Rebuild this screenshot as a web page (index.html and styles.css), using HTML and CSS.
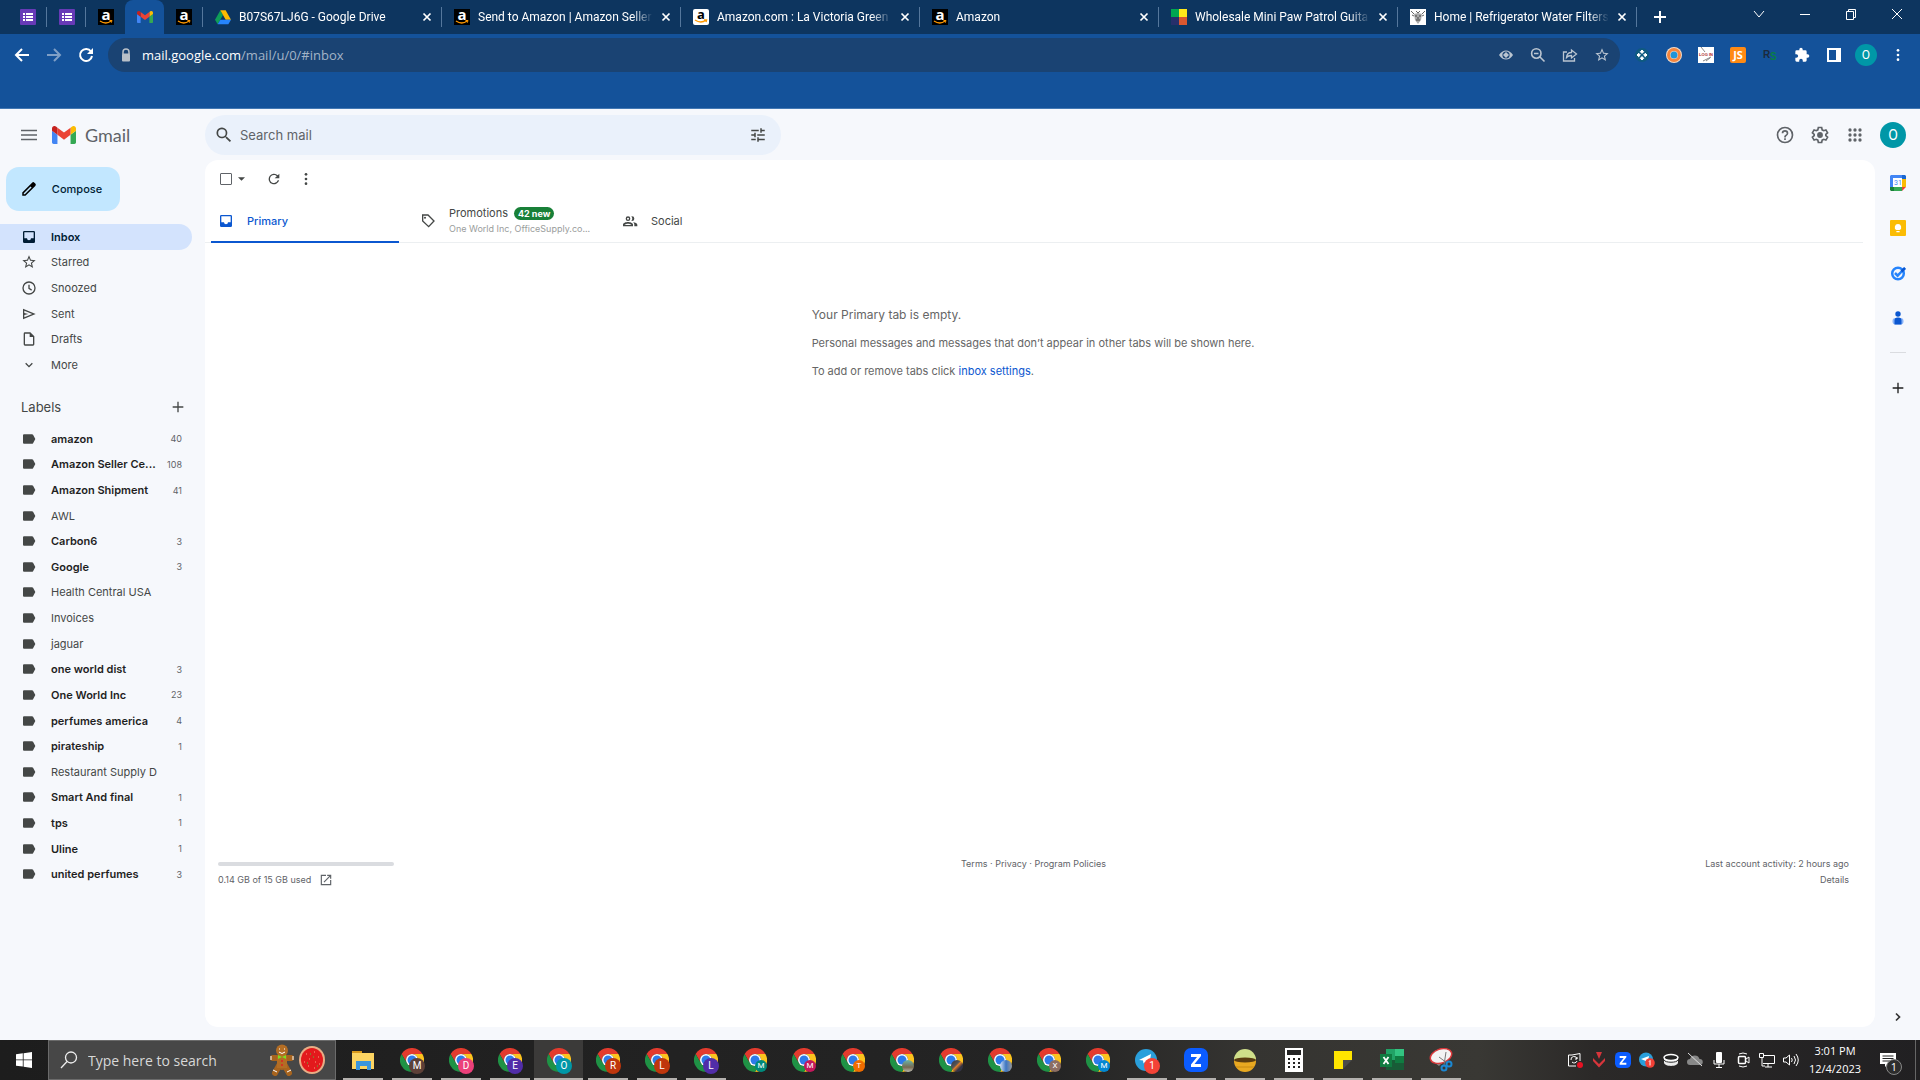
FILE: index.html
```html
<!DOCTYPE html>
<html lang="en">
<head>
    <meta charset="UTF-8">
    <meta name="viewport" content="width=device-width, initial-scale=1.0">
    <title>Inbox - Gmail</title>
    <link rel="stylesheet" href="styles.css">
</head>
<body>

<!-- icons used more than once -->
<svg class="sprite" aria-hidden="true">
    <symbol id="i-list" viewBox="0 0 16 16"><rect width="16" height="16" rx="1" fill="#673ab7"/><path fill="#fff" d="M3 4h2v2H3zM6 4h7v2H6zM3 7h2v2H3zM6 7h7v2H6zM3 10h2v2H3zM6 10h7v2H6z"/></symbol>
    <symbol id="i-amazon" viewBox="0 0 16 16"><rect width="16" height="16" fill="#000"/><text x="8" y="11" text-anchor="middle" font-family="Open Sans" font-weight="700" font-size="15" fill="#fff">a</text><path d="M2 12q6 4 11 0" fill="none" stroke="#f90" stroke-width="1.3"/><path d="M11.500 11.500h2.500l-.7 2.200" fill="none" stroke="#f90"/></symbol>
    <symbol id="i-close" viewBox="0 0 10 10"><path d="M1.500 1.500l7 7M8.500 1.500l-7 7" stroke="currentColor" stroke-width="1.700"/></symbol>
    <symbol id="i-gmail" viewBox="52 42 88 66"><path fill="#4285f4" d="M58 108h14V74L52 59v43c0 3.320 2.690 6 6 6"/><path fill="#34a853" d="M120 108h14c3.320 0 6-2.690 6-6V59l-20 15"/><path fill="#fbbc04" d="M120 48v26l20-15v-8c0-7.420-8.470-11.650-14.400-7.200"/><path fill="#ea4335" d="M72 74V48l24 18 24-18v26L96 92"/><path fill="#c5221f" d="M52 51v8l20 15V48l-5.600-4.200c-5.940-4.450-14.400-.22-14.400 7.200"/></symbol>
    <symbol id="i-inbox" viewBox="0 0 24 24"><path d="M19 3H5a2 2 0 0 0-2 2v14a2 2 0 0 0 2 2h14a2 2 0 0 0 2-2V5a2 2 0 0 0-2-2zm0 11h-4a3 3 0 0 1-6 0H5V5h14z"/></symbol>
    <symbol id="i-star" viewBox="0 0 24 24"><path d="M22 9.240l-7.190-.62L12 2 9.190 8.630 2 9.240l5.460 4.730L5.820 21 12 17.270 18.180 21l-1.630-7.030zM12 15.400l-3.760 2.270 1-4.280-3.320-2.880 4.380-.38L12 6.100l1.710 4.040 4.380.38-3.320 2.880 1 4.280z"/></symbol>
    <symbol id="i-label" viewBox="0 0 24 24"><path d="M17 5H4.500A1.500 1.500 0 0 0 3 6.500v11A1.500 1.500 0 0 0 4.500 19H16.500a2 2 0 0 0 1.600-.8L21.500 12l-3.400-6.200A2 2 0 0 0 16.500 5z"/></symbol>
    <symbol id="i-plus" viewBox="0 0 24 24"><path d="M20 13h-7v7h-2v-7H4v-2h7V4h2v7h7z"/></symbol>
    <symbol id="i-dots" viewBox="0 0 24 24"><circle cx="12" cy="5" r="2"/><circle cx="12" cy="12" r="2"/><circle cx="12" cy="19" r="2"/></symbol>
    <symbol id="i-refresh" viewBox="0 0 24 24"><path d="M17.650 6.350A8 8 0 1 0 19.730 14h-2.080A6 6 0 1 1 12 6c1.660 0 3.140.69 4.220 1.780L13 11h7V4z"/></symbol>
    <symbol id="i-search" viewBox="0 0 24 24"><path d="M15.500 14h-.79l-.28-.27a6.500 6.500 0 1 0-.7.7l.27.28v.79l5 4.990L20.490 19zm-6 0a4.500 4.500 0 1 1 0-9 4.500 4.500 0 0 1 0 9z"/></symbol>
    <symbol id="i-chrome" viewBox="0 0 48 48"><path fill="#e33b2e" d="M24 12h20.800A24 24 0 0 0 3.200 12l10.400 18A12 12 0 0 1 24 12z"/><path fill="#fcc31e" d="M34.400 30 24 48a24 24 0 0 0 20.800-36H24a12 12 0 0 1 10.400 18z"/><path fill="#1f9245" d="M13.600 30a12 12 0 0 0 20.800 0L24 48A24 24 0 0 1 3.200 12z"/><circle cx="24" cy="24" r="12" fill="#fff"/><circle cx="24" cy="24" r="9" fill="#2d7bea"/></symbol>
    <symbol id="i-zoom" viewBox="0 0 24 24"><rect width="24" height="24" rx="7" fill="#0b5cff"/><path d="M7 6h10v2l-6.500 8H17v3H7v-2.500L13 9H7z" fill="#fff"/></symbol>
    <symbol id="i-telegram" viewBox="0 0 24 24"><circle cx="11" cy="12" r="11" fill="#2a9fdb"/><path d="M4 12l12-6-1.500 10-4-2.500-2 2-.5-3z" fill="#fff"/></symbol>
</svg>

<header class="browser">
    <div class="tab-strip">
        <div class="pinned"><svg><use href="#i-list"/></svg></div>
        <div class="pinned"><svg><use href="#i-list"/></svg></div>
        <div class="pinned no-line"><svg><use href="#i-amazon"/></svg></div>
        <div class="pinned active"><svg><use href="#i-gmail"/></svg></div>
        <div class="pinned"><svg><use href="#i-amazon"/></svg></div>
        <div class="tab">
            <svg viewBox="0 0 24 22"><path fill="#0f9d58" d="M8 1L0 15l4 7 8-14z"/><path fill="#ffba00" d="M8 1h8l8 14h-8z"/><path fill="#2684fc" d="M4 22l4-7h16l-4 7z"/></svg>
            <span class="tab-title">B07S67LJ6G - Google Drive</span>
            <button class="tab-close" aria-label="Close tab"><svg><use href="#i-close"/></svg></button>
        </div>
        <div class="tab">
            <svg><use href="#i-amazon"/></svg>
            <span class="tab-title">Send to Amazon | Amazon Seller</span>
            <button class="tab-close" aria-label="Close tab"><svg><use href="#i-close"/></svg></button>
        </div>
        <div class="tab">
            <svg viewBox="0 0 16 16"><rect width="16" height="16" rx="2" fill="#fff"/><text x="8" y="10" text-anchor="middle" font-family="Open Sans" font-weight="700" font-size="13" fill="#000">a</text><path d="M2 11q6 4 11 0M11 11h2.500l-.5 2" fill="none" stroke="#f90" stroke-width="1.500"/></svg>
            <span class="tab-title">Amazon.com : La Victoria Green</span>
            <button class="tab-close" aria-label="Close tab"><svg><use href="#i-close"/></svg></button>
        </div>
        <div class="tab">
            <svg><use href="#i-amazon"/></svg>
            <span class="tab-title">Amazon</span>
            <button class="tab-close" aria-label="Close tab"><svg><use href="#i-close"/></svg></button>
        </div>
        <div class="tab">
            <svg viewBox="0 0 16 16"><path fill="#00a651" d="M0 0h8v8H0z"/><path fill="#ffe81a" d="M8 0h8v8H8z"/><path fill="#262f6b" d="M0 8h8v8H0z"/><path fill="#d9572f" d="M8 8h8v8H8z"/></svg>
            <span class="tab-title">Wholesale Mini Paw Patrol Guita</span>
            <button class="tab-close" aria-label="Close tab"><svg><use href="#i-close"/></svg></button>
        </div>
        <div class="tab">
            <svg viewBox="0 0 16 16"><path fill="#fff" d="M0 0h16v16H0z"/><path d="M1 2l3 3M15 2l-3 3M2 6l2 1M14 6l-2 1M6 2l2 2 2-2" stroke="#666" fill="none"/><path d="M4 5l4-1 4 1-1 6-3 4-3-4z" fill="#aaa"/><path d="M5 7h2M9 7h2M6 11h4M8 8v2" stroke="#444"/></svg>
            <span class="tab-title">Home | Refrigerator Water Filters</span>
            <button class="tab-close" aria-label="Close tab"><svg><use href="#i-close"/></svg></button>
        </div>
        <button class="new-tab" aria-label="New tab"><svg viewBox="0 0 14 14"><path d="M7 1v12M1 7h12" stroke="#fff" stroke-width="2"/></svg></button>
        <div class="window-buttons">
            <button aria-label="Search tabs"><svg viewBox="0 0 12 12"><path d="M1 3l5 6 5-6"/></svg></button>
            <button aria-label="Minimize"><svg viewBox="0 0 12 12"><path d="M1 6.500h10"/></svg></button>
            <button aria-label="Restore"><svg viewBox="0 0 12 12"><path d="M1.500 3.500h7v8h-7zM3.500 3.500v-2h7v8h-2"/></svg></button>
            <button aria-label="Close"><svg viewBox="0 0 12 12"><path d="M1 1l10 10M11 1L1 11"/></svg></button>
        </div>
    </div>
    <div class="address-row">
        <div class="history">
            <button aria-label="Back"><svg viewBox="0 0 16 16"><path d="M15 8H2M8 2L2 8l6 6" fill="none" stroke="#fff" stroke-width="2"/></svg></button>
            <button aria-label="Forward"><svg viewBox="0 0 16 16"><path d="M1 8h13M8 2l6 6-6 6" fill="none" stroke="#7f9fc6" stroke-width="2"/></svg></button>
            <button aria-label="Reload"><svg viewBox="0 0 16 16"><path d="M13 4.500A6 6 0 1 0 14 9" fill="none" stroke="#fff" stroke-width="2"/><path d="M15 1v6H9z" fill="#fff"/></svg></button>
        </div>
        <div class="omnibox">
            <svg class="lock" viewBox="0 0 12 14"><path d="M3 6V4a3 3 0 0 1 6 0v2" fill="none" stroke="#b9c0c8" stroke-width="1.500"/><rect x="2" y="5.500" width="8" height="8" rx="1" fill="#b9c0c8"/></svg>
            <a class="url" href="#inbox"><span>mail.google.com</span>/mail/u/0/#inbox</a>
            <svg viewBox="0 0 16 16"><path d="M1 8q3-4.500 7-4.500T15 8q-3 4.500-7 4.500T1 8z" fill="#bac5d1"/><circle cx="8" cy="8" r="3.600" fill="#1a4373"/><path d="M8 5l3 3-3 3-3-3z" fill="#bac5d1"/></svg>
            <svg viewBox="0 0 16 16"><path d="M11 6.500a4.700 4.700 0 1 1-9.400 0 4.700 4.700 0 0 1 9.400 0zM10 10l4.500 4.500M4 6.500h4.500" fill="none" stroke="#bac5d1" stroke-width="1.600"/></svg>
            <svg viewBox="0 0 16 16"><path d="M5 5H1.500v9h11V11" fill="none" stroke="#bac5d1" stroke-width="1.300"/><path d="M4.500 10.500c.3-3.500 2.200-5 5-5V3l5 4-5 4V8.500c-2.200 0-3.800.5-5 2z" fill="none" stroke="#bac5d1" stroke-width="1.300"/></svg>
            <svg class="bookmark"><use href="#i-star"/></svg>
        </div>
        <div class="extensions">
            <svg viewBox="0 0 16 16"><circle cx="8" cy="8" r="7" fill="#0f5a80"/><path d="M8 3l1.700 1.700L8 6.400 6.300 4.700zM8 9.600l1.700 1.700L8 13l-1.700-1.700zM4.700 6.300L6.400 8 4.700 9.700 3 8zM11.300 6.300L13 8l-1.700 1.700L9.600 8z" fill="#fff" stroke="#fff"/></svg>
            <svg viewBox="0 0 16 16"><circle cx="8" cy="8" r="8" fill="#f3dcc8"/><circle cx="8" cy="8" r="5.500" fill="none" stroke="#f5853d" stroke-width="3"/><circle cx="8" cy="8" r="3.500" fill="#1f94d8"/></svg>
            <svg viewBox="0 0 16 16"><path d="M0 0h16v16H0z" fill="#fff"/><path d="M3 0l4 5M5 14l8-4M8 14l4-3" stroke="#888"/><text x="8" y="9" text-anchor="middle" font-family="Liberation Sans" font-size="4" font-weight="700" fill="#a22">LOG IN</text></svg>
            <svg viewBox="0 0 16 16"><rect width="16" height="16" rx="2" fill="#ff8a13"/><text x="8" y="12" text-anchor="middle" font-family="Open Sans" font-size="11" font-weight="700" fill="#fff">JS</text></svg>
            <svg viewBox="0 0 16 16"><text x="1" y="11" font-family="Liberation Sans" font-size="10" font-weight="700" fill="#1c2a3c">R</text><text x="8" y="13" font-family="Liberation Sans" font-size="10" font-weight="700" fill="#087d47">S</text></svg>
            <svg viewBox="0 0 24 24" fill="#fff"><path d="M20.500 11H19V7a2 2 0 0 0-2-2h-4V3.500a2.500 2.500 0 0 0-5 0V5H4a2 2 0 0 0-2 2v3.800h1.500a2.700 2.700 0 0 1 0 5.400H2V20a2 2 0 0 0 2 2h3.800v-1.500a2.700 2.700 0 0 1 5.400 0V22H17a2 2 0 0 0 2-2v-4h1.500a2.500 2.500 0 0 0 0-5z"/></svg>
            <svg viewBox="0 0 16 16"><path d="M1 1h14v14H1z" fill="#fff"/><path d="M3 3h7v10H3z" fill="#14529a"/></svg>
            <span class="avatar">O</span>
            <svg fill="#fff"><use href="#i-dots"/></svg>
        </div>
    </div>
</header>

<div class="gmail">
    <header class="app-bar">
        <div class="brand">
            <button aria-label="Main menu"><svg viewBox="0 0 16 12"><path d="M0 1.500h16M0 6h16M0 10.500h16" stroke="#5f6368" stroke-width="1.500"/></svg></button>
            <svg class="brand-logo"><use href="#i-gmail"/></svg>
            <span class="brand-name">Gmail</span>
        </div>
        <form class="search">
            <svg><use href="#i-search"/></svg>
            <input type="text" placeholder="Search mail" aria-label="Search mail">
            <button type="button" aria-label="Show search options"><svg viewBox="0 0 24 24"><path d="M3 17v2h6v-2zM3 5v2h10V5zm10 16v-2h8v-2h-8v-2h-2v6zM7 9v2H3v2h4v2h2V9zm14 4v-2H11v2zm-6-4h2V7h4V5h-4V3h-2z"/></svg></button>
        </form>
        <div class="account">
            <button aria-label="Support"><svg viewBox="0 0 24 24"><path d="M11 18h2v-2h-2zm1-16a10 10 0 1 0 0 20 10 10 0 0 0 0-20zm0 18a8 8 0 1 1 0-16 8 8 0 0 1 0 16zm0-14a4 4 0 0 0-4 4h2a2 2 0 1 1 4 0c0 2-3 1.750-3 5h2c0-2.250 3-2.500 3-5a4 4 0 0 0-4-4z"/></svg></button>
            <button aria-label="Settings"><svg viewBox="0 0 24 24"><path d="M10 3h4l.6 2.800 1.800 1 2.700-.9 2 3.400-2.100 1.900v1.600l2.100 1.900-2 3.400-2.700-.9-1.800 1L14 21h-4l-.6-2.800-1.800-1-2.700.9-2-3.400L5 12.800v-1.600L2.900 9.300l2-3.400 2.700.9 1.800-1z" fill="none" stroke="#5f6368" stroke-width="2"/><circle cx="12" cy="12" r="3.500"/></svg></button>
            <button aria-label="Google apps"><svg viewBox="0 0 24 24"><circle cx="6" cy="6" r="2"/><circle cx="12" cy="6" r="2"/><circle cx="18" cy="6" r="2"/><circle cx="6" cy="12" r="2"/><circle cx="12" cy="12" r="2"/><circle cx="18" cy="12" r="2"/><circle cx="6" cy="18" r="2"/><circle cx="12" cy="18" r="2"/><circle cx="18" cy="18" r="2"/></svg></button>
            <button class="avatar large" aria-label="Account">O</button>
        </div>
    </header>

    <aside class="sidebar">
        <button class="compose">
            <svg viewBox="0 0 24 24"><path d="M20.400 4.800l-1.200-1.200a2.200 2.200 0 0 0-3.100 0L3 16.700V21h4.300L20.400 7.900a2.200 2.200 0 0 0 0-3.100zM6.500 19H5v-1.500l9-9L15.500 10z"/></svg>
            Compose
        </button>
        <nav class="folders">
            <a class="current" href="#inbox"><svg><use href="#i-inbox"/></svg>Inbox</a>
            <a href="#starred"><svg><use href="#i-star"/></svg>Starred</a>
            <a href="#snoozed"><svg viewBox="0 0 24 24"><path d="M12 2a10 10 0 1 0 0 20 10 10 0 0 0 0-20zm0 18a8 8 0 1 1 0-16 8 8 0 0 1 0 16zM13 7h-2v6l4.500 3 1-1.600L13 12z"/></svg>Snoozed</a>
            <a href="#sent"><svg viewBox="0 0 24 24"><path d="M3 4v16l19-8zm2 3l11.800 5L5 17v-3.500l6-1.500-6-1.500z"/></svg>Sent</a>
            <a href="#drafts"><svg viewBox="0 0 24 24"><path d="M14 2H6a2 2 0 0 0-2 2v16a2 2 0 0 0 2 2h12a2 2 0 0 0 2-2V8zM18 20H6V4h7v5h5z"/></svg>Drafts</a>
            <a href="#more"><svg viewBox="0 0 24 24"><path d="M7 9.500l5 5 5-5" fill="none" stroke="#444746" stroke-width="2"/></svg>More</a>
        </nav>
        <div class="labels-head">
            <h2>Labels</h2>
            <button aria-label="Create new label"><svg><use href="#i-plus"/></svg></button>
        </div>
        <nav class="labels">
            <a class="unread" href="#amazon"><svg><use href="#i-label"/></svg><span>amazon</span><small>40</small></a>
            <a class="unread" href="#seller"><svg><use href="#i-label"/></svg><span>Amazon Seller Ce...</span><small>108</small></a>
            <a class="unread" href="#shipment"><svg><use href="#i-label"/></svg><span>Amazon Shipment</span><small>41</small></a>
            <a href="#awl"><svg><use href="#i-label"/></svg><span>AWL</span></a>
            <a class="unread" href="#carbon6"><svg><use href="#i-label"/></svg><span>Carbon6</span><small>3</small></a>
            <a class="unread" href="#google"><svg><use href="#i-label"/></svg><span>Google</span><small>3</small></a>
            <a href="#health"><svg><use href="#i-label"/></svg><span>Health Central USA</span></a>
            <a href="#invoices"><svg><use href="#i-label"/></svg><span>Invoices</span></a>
            <a href="#jaguar"><svg><use href="#i-label"/></svg><span>jaguar</span></a>
            <a class="unread" href="#owd"><svg><use href="#i-label"/></svg><span>one world dist</span><small>3</small></a>
            <a class="unread" href="#owi"><svg><use href="#i-label"/></svg><span>One World Inc</span><small>23</small></a>
            <a class="unread" href="#perfumes"><svg><use href="#i-label"/></svg><span>perfumes america</span><small>4</small></a>
            <a class="unread" href="#pirateship"><svg><use href="#i-label"/></svg><span>pirateship</span><small>1</small></a>
            <a href="#restaurant"><svg><use href="#i-label"/></svg><span>Restaurant Supply D</span></a>
            <a class="unread" href="#smart"><svg><use href="#i-label"/></svg><span>Smart And final</span><small>1</small></a>
            <a class="unread" href="#tps"><svg><use href="#i-label"/></svg><span>tps</span><small>1</small></a>
            <a class="unread" href="#uline"><svg><use href="#i-label"/></svg><span>Uline</span><small>1</small></a>
            <a class="unread" href="#united"><svg><use href="#i-label"/></svg><span>united perfumes</span><small>3</small></a>
        </nav>
    </aside>

    <main class="panel">
        <div class="mail-tools">
            <input type="checkbox" aria-label="Select all">
            <button class="caret" aria-label="Select"><svg viewBox="0 0 8 4"><path d="M0 0h8L4 4z"/></svg></button>
            <button aria-label="Refresh"><svg><use href="#i-refresh"/></svg></button>
            <button aria-label="More"><svg><use href="#i-dots"/></svg></button>
        </div>
        <nav class="categories">
            <a class="selected" href="#primary"><svg><use href="#i-inbox"/></svg>Primary</a>
            <a href="#promotions">
                <svg viewBox="0 0 24 24"><path d="M4 3h8l9 9-8 8.500L4 12z" fill="none" stroke="#444746" stroke-width="2"/><circle cx="7.500" cy="7" r="1.500"/></svg>
                <span class="promo">
                    <span class="promo-title">Promotions <b>42 new</b></span>
                    <span class="senders">One World Inc, OfficeSupply.co...</span>
                </span>
            </a>
            <a href="#social"><svg viewBox="0 0 24 24"><path d="M9 5a3.500 3.500 0 1 0 0 7 3.500 3.500 0 0 0 0-7zm0 2a1.500 1.500 0 1 1 0 3 1.500 1.500 0 0 1 0-3zM9 13.500c-3 0-7.500 1.300-7.500 4V20h15v-2.500c0-2.700-4.500-4-7.500-4zM3.800 18c.7-1 3-2 5.200-2s4.500 1 5.200 2zM15 12a3.500 3.500 0 0 0 0-7l-1 .2a5 5 0 0 1 0 6.600zM16.500 13.700c1.300 1 2 2.200 2 3.800V20H23v-2.500c0-2.200-3.200-3.500-6.500-3.800z"/></svg>Social</a>
        </nav>
        <div class="empty">
            <div>
                <h3>Your Primary tab is empty.</h3>
                <p>Personal messages and messages that don’t appear in other tabs will be shown here.</p>
                <p>To add or remove tabs click <a href="#settings">inbox settings</a>.</p>
            </div>
        </div>
        <footer class="mail-footer">
            <div class="storage">
                <div class="meter"></div>
                <span>0.14 GB of 15 GB used <svg viewBox="0 0 24 24"><path d="M19 19H5V5h7V3H3v18h18v-9h-2zM14 3v2h3.600l-9.800 9.800 1.400 1.400L19 6.400V10h2V3z"/></svg></span>
            </div>
            <div class="terms"><a href="#terms">Terms</a> · <a href="#privacy">Privacy</a> · <a href="#policies">Program Policies</a></div>
            <div class="activity">Last account activity: 2 hours ago<br><a href="#details">Details</a></div>
        </footer>
    </main>

    <aside class="addons">
        <button aria-label="Calendar"><svg viewBox="0 0 16 16"><path fill="#4285f4" d="M1 0h11v3H3v10H0V1z"/><path fill="#1967d2" d="M12 0h3l1 1v3h-4z"/><path fill="#fbbc04" d="M12 4h4v8h-4z"/><path fill="#34a853" d="M3 12h9v4H3z"/><path fill="#188038" d="M0 12h4v4H1l-1-1z"/><path fill="#ea4335" d="M12 12h4l-4 4z"/><path fill="#fff" d="M3 3h9v9H3z"/><text x="8" y="10" text-anchor="middle" font-family="Roboto" font-size="7" fill="#4285f4">31</text></svg></button>
        <button aria-label="Keep"><svg viewBox="0 0 16 16"><rect width="16" height="16" rx="1" fill="#fbbc04"/><path fill="#fff" d="M8 4a3.200 3.200 0 0 0-1.600 6h3.200A3.200 3.200 0 0 0 8 4zM6.400 11h3.200v1.300H6.400z"/></svg></button>
        <button aria-label="Tasks"><svg viewBox="0 0 16 16"><circle cx="8" cy="8.500" r="5.800" fill="none" stroke="#2684fc" stroke-width="2.500"/><path d="M5 8l2.600 2.600L15 3" fill="none" stroke="#2684fc" stroke-width="2.500"/><path d="M11.500 6.500L15 3" stroke="#0b57d0" stroke-width="2.500"/></svg></button>
        <button aria-label="Contacts"><svg viewBox="0 0 16 16"><circle cx="8" cy="4" r="2.700" fill="#0b57d0"/><rect x="2.500" y="8" width="11" height="6.500" rx="3" fill="#8ab4f8"/><path fill="#0b57d0" d="M4.500 10.500a3 3 0 0 1 3-3h1a3 3 0 0 1 3 3v4h-7z"/></svg></button>
        <hr>
        <button aria-label="Get add-ons"><svg fill="#1f1f1f"><use href="#i-plus"/></svg></button>
        <button class="hide-panel" aria-label="Hide side panel"><svg viewBox="0 0 16 16"><path d="M6 4.500L9.500 8 6 11.500" fill="none" stroke="#333" stroke-width="1.700"/></svg></button>
    </aside>
</div>

<footer class="taskbar">
    <button class="start" aria-label="Start"><svg viewBox="0 0 16 16"><path fill="#fff" d="M0 2.200L6.800 1.300v6.200H0zM7.600 1.200L16 0v7.500H7.600zM0 8.300h6.800v6.300L0 13.700zM7.600 8.300H16V16l-8.400-1.200z"/></svg></button>
    <div class="task-search">
        <svg class="lens" viewBox="0 0 18 18"><circle cx="11" cy="6.500" r="5.500" fill="none" stroke="#eee" stroke-width="1.300"/><path d="M7 10.500L1 17" stroke="#eee" stroke-width="1.300"/></svg>
        <input type="text" placeholder="Type here to search" aria-label="Type here to search">
        <svg class="ginger" viewBox="0 0 24 32"><path d="M12 13v10M3 14l18 0M10 20l-5 9M14 20l5 9" stroke="#a8641e" stroke-width="6" stroke-linecap="round"/><path d="M7 12h10v12H7z" fill="#b36d24"/><circle cx="12" cy="6.500" r="6" fill="#b36d24"/><path d="M9 8q3 3 6 0M9 5h1M14 5h1" stroke="#fff" fill="none"/><path d="M12 13l-4-2v4zM12 13l4-2v4z" fill="#7be020"/><path d="M1 12v4M23 12v4M3 26l4 2M21 26l-4 2" stroke="#fff"/><circle cx="12" cy="17" r="1" fill="#d22"/><circle cx="12" cy="21" r="1" fill="#d22"/></svg>
        <svg class="cookie" viewBox="0 0 26 28"><ellipse cx="13" cy="14" rx="13" ry="14" fill="#e8ad85"/><ellipse cx="13" cy="14" rx="11" ry="12" fill="#e3191c"/><path d="M7 8h1M15 6h1M19 11h1M10 13h1M5 16h1M16 16h1M9 20h1M15 22h1M20 18h1" stroke="#ff9c80" stroke-width="1"/><path d="M11 8h1M14 11h1M8 17h1M18 20h1" stroke="#3bd13b"/></svg>
    </div>
    <div class="apps">
        <button class="open" aria-label="File Explorer"><svg viewBox="0 0 24 24"><path fill="#d99a1c" d="M1 3h10v4H1z"/><path fill="#fcd462" d="M1 5h22v16H1z"/><path fill="#3a96dd" d="M5 13h15v9h-4v-4h-7v4H5z"/></svg></button>
        <button class="open" aria-label="Chrome"><svg><use href="#i-chrome"/></svg><i class="brown">M</i></button>
        <button class="open" aria-label="Chrome"><svg><use href="#i-chrome"/></svg><i class="pink">D</i></button>
        <button class="open" aria-label="Chrome"><svg><use href="#i-chrome"/></svg><i class="purple">E</i></button>
        <button class="open focused" aria-label="Chrome"><svg><use href="#i-chrome"/></svg><i class="teal">O</i></button>
        <button class="open" aria-label="Chrome"><svg><use href="#i-chrome"/></svg><i class="rust">R</i></button>
        <button class="open" aria-label="Chrome"><svg><use href="#i-chrome"/></svg><i class="rust">L</i></button>
        <button class="open" aria-label="Chrome"><svg><use href="#i-chrome"/></svg><i class="purple">L</i></button>
        <button aria-label="Chrome"><svg><use href="#i-chrome"/></svg><i class="small green">M</i></button>
        <button aria-label="Chrome"><svg><use href="#i-chrome"/></svg><i class="small magenta">M</i></button>
        <button aria-label="Chrome"><svg><use href="#i-chrome"/></svg><i class="small orange">T</i></button>
        <button aria-label="Chrome"><svg><use href="#i-chrome"/></svg><i class="small photo-a"></i></button>
        <button aria-label="Chrome"><svg><use href="#i-chrome"/></svg><i class="small photo-b"></i></button>
        <button aria-label="Chrome"><svg><use href="#i-chrome"/></svg><i class="small photo-c"></i></button>
        <button aria-label="Chrome"><svg><use href="#i-chrome"/></svg><i class="small taupe">X</i></button>
        <button aria-label="Chrome"><svg><use href="#i-chrome"/></svg><i class="small blue">M</i></button>
        <button class="open" aria-label="Telegram"><svg><use href="#i-telegram"/></svg><i class="red">1</i></button>
        <button class="open" aria-label="Zoom"><svg><use href="#i-zoom"/></svg></button>
        <button class="open" aria-label="Bowl"><svg viewBox="0 0 24 24"><circle cx="12" cy="13" r="11" fill="#e9a921"/><path d="M1 12a11 11 0 0 1 22 0z" fill="#cfdf8a"/><ellipse cx="12" cy="12" rx="11" ry="2.500" fill="#5a3c10"/><path d="M3 19h18" stroke="#c88a12"/></svg></button>
        <button class="open" aria-label="Calculator"><svg viewBox="0 0 24 24"><path fill="#fff" d="M3 0h18v24H3z"/><path fill="#222" d="M5 2h14v5H5z"/><path d="M6 11h12M6 15h12M6 19h12" stroke="#222" stroke-width="2" stroke-dasharray="2 3"/></svg></button>
        <button class="open" aria-label="Sticky Notes"><svg viewBox="0 0 24 24"><path fill="#ffe500" d="M3 3h18v9h-9v9H3z"/><path fill="#4a4a4a" d="M12 12h9l-9 9z"/></svg></button>
        <button class="open" aria-label="Excel"><svg viewBox="0 0 24 24"><path fill="#21a366" d="M6 1h9v11H6z"/><path fill="#33c481" d="M15 1h9v7h-9z"/><path fill="#107c41" d="M15 8h9v7h-9z"/><path fill="#185c37" d="M6 12h9v3h9v7H6z"/><path fill="#107c41" d="M0 6h12v13H0z"/><path d="M3.500 9l5 7M8.500 9l-5 7" stroke="#fff" stroke-width="1.800"/></svg></button>
        <button class="open" aria-label="Snipping Tool"><svg viewBox="0 0 24 24"><path d="M2 12l8 6 4-4" fill="#8a8a8a"/><ellipse cx="12" cy="8" rx="11" ry="7" fill="#f3f3f3" stroke="#d9383a" stroke-width="1.500" transform="rotate(-18 12 8)"/><path d="M17 4l-2 13M10 9l8 6" stroke="#777"/><circle cx="15" cy="20" r="2.500" fill="none" stroke="#1b87d2" stroke-width="2"/><circle cx="20" cy="16" r="2.500" fill="none" stroke="#1b87d2" stroke-width="2"/></svg></button>
    </div>
    <div class="tray">
        <svg viewBox="0 0 16 16"><path d="M13 9V1.500L5 3H1.500v11H9" fill="none" stroke="#fff"/><path d="M4 8a3 3 0 0 1 6-1M10 5v2H8M10 9a3 3 0 0 1-5 1" fill="none" stroke="#fff"/><circle cx="13" cy="13" r="3" fill="#e81123"/></svg>
        <svg viewBox="0 0 16 16"><path d="M5 0h6l-3 7zM2 6l6 6 6-6v3l-6 6.500L2 9z" fill="#d6353b"/></svg>
        <svg><use href="#i-zoom"/></svg>
        <svg viewBox="0 0 16 16"><circle cx="7" cy="7.500" r="7" fill="#2a9fdb"/><path d="M2 7l8-3-1 6z" fill="#fff"/><circle cx="11" cy="11" r="4.800" fill="#f24036"/><path d="M10 9.500l1-1v5" fill="none" stroke="#fff"/></svg>
        <svg viewBox="0 0 16 16"><path d="M1 5.500v5c0 4.500 14 4.500 14 0v-5z" fill="#ececec"/><ellipse cx="8" cy="5.500" rx="7" ry="3" fill="#222" stroke="#fff" stroke-width="1.500"/><path d="M1 8c1 3 13 3 14 0" fill="none" stroke="#333"/></svg>
        <svg viewBox="0 0 16 16"><path d="M3 13a3 3 0 0 1 0-6 5 5 0 0 1 9.500 0A3 3 0 0 1 13 13z" fill="#888"/><path d="M1 1l14 13" stroke="#ddd"/></svg>
        <svg viewBox="0 0 16 16"><rect x="5" y="0" width="6" height="11" rx="1" fill="#fff"/><path d="M3 8v4h10V8M8 12v4M5 15.500h6" fill="none" stroke="#fff"/></svg>
        <svg viewBox="0 0 16 16"><path d="M4 2q4-2 8 0M4 14q4 2 8 0" fill="none" stroke="#fff"/><rect x="3.500" y="4.500" width="7" height="7" rx="1" fill="none" stroke="#fff" stroke-width="1.500"/><path d="M11 7l3-2v6l-3-2" fill="none" stroke="#fff"/></svg>
        <svg viewBox="0 0 16 16"><path d="M4 3.500h11.500v8H4M9 12v3M6 15h7M3 6v8h3M.5 1.500h4v4h-4z" fill="none" stroke="#fff"/></svg>
        <svg viewBox="0 0 16 16"><path d="M.5 6v4H3l3.500 3V3L3 6zM8.500 6q1.500 2 0 4M11 4q3 4 0 8M13 2q4.500 6 0 12" fill="none" stroke="#fff"/></svg>
    </div>
    <div class="clock"><span>3:01 PM</span><span>12/4/2023</span></div>
    <button class="notifications" aria-label="Notifications"><svg viewBox="0 0 16 16"><path d="M0 1h16v11H8l-3 3v-3H0z" fill="#fff"/><path d="M2.500 4h11M2.500 6.500h11M2.500 9h8" stroke="#222"/></svg><i>1</i></button>
    <div class="show-desktop"></div>
</footer>

</body>
</html>
```
FILE: styles.css
```css
* {
    box-sizing: border-box;
}
body {
    margin: 0;
    height: 100vh;
    display: flex;
    flex-direction: column;
    overflow: hidden;
    background: #f6f8fc;
    font-family: Inter, sans-serif;
    font-size: 11px;
    color: #444746;
}
button {
    border: none;
    background: none;
    padding: 0;
    margin: 0;
    font: inherit;
    color: inherit;
    display: flex;
    align-items: center;
    justify-content: center;
}
a {
    color: inherit;
    text-decoration: none;
}
svg {
    width: 16px;
    height: 16px;
    flex: none;
}
input {
    font: inherit;
    color: inherit;
    min-width: 0;
}
.sprite {
    display: none;
}

/* browser */
.browser {
    background: #14529a;
    color: #fff;
    font-family: "Open Sans", sans-serif;
    height: 109px;
    border-bottom: 1px solid #4378b3;
    flex: none;
}
.tab-strip {
    display: flex;
    height: 34px;
    padding-left: 8px;
    background: #0d355f;
}
.pinned {
    width: 39px;
    display: flex;
    align-items: center;
    justify-content: center;
    position: relative;
}
.pinned::after, .tab::after {
    content: "";
    position: absolute;
    right: 0;
    top: 7px;
    width: 1px;
    height: 20px;
    background: #55779c;
}
.pinned.no-line::after, .pinned.active::after {
    display: none;
}
.pinned.active {
    background: #14529a;
    border-radius: 8px 8px 0 0;
}
.pinned.active svg {
    height: 12px;
}
.tab {
    flex: 0 1 239px;
    min-width: 0;
    display: flex;
    align-items: center;
    gap: 8px;
    padding: 0 10px 0 12px;
    position: relative;
}
.tab-title {
    flex: 1;
    font-family: Roboto, sans-serif;
    font-size: 12px;
    line-height: 16px;
    white-space: nowrap;
    overflow: hidden;
    -webkit-mask-image: linear-gradient(to right, #000 88%, transparent);
    mask-image: linear-gradient(to right, #000 88%, transparent);
}
.tab-close svg {
    width: 10px;
    height: 10px;
}
.new-tab {
    width: 46px;
}
.new-tab svg {
    width: 14px;
    height: 14px;
}
.window-buttons {
    display: flex;
    margin-left: auto;
    height: 28px;
}
.window-buttons button {
    width: 46px;
}
.window-buttons svg {
    width: 12px;
    height: 12px;
    fill: none;
    stroke: #fff;
}
.address-row {
    display: flex;
    align-items: center;
    padding: 4px 14px 0;
}
.history {
    display: flex;
    gap: 16px;
    margin-right: 14px;
}
.omnibox {
    flex: 1;
    display: flex;
    align-items: center;
    gap: 16px;
    height: 34px;
    padding: 0 10px 0 12px;
    border-radius: 17px;
    background: #1a4373;
}
.omnibox .lock {
    width: 12px;
    height: 14px;
    margin-right: -6px;
}
.url {
    flex: 1;
    font-size: 13px;
    color: #a3b4c7;
}
.url span {
    color: #fff;
}
.bookmark {
    fill: #bac5d1;
}
.extensions {
    display: flex;
    align-items: center;
    gap: 16px;
    margin-left: 14px;
}
.avatar {
    display: flex;
    align-items: center;
    justify-content: center;
    width: 22px;
    height: 22px;
    margin: 0 -3px;
    border-radius: 50%;
    background: #0097a7;
    color: #fff;
    font-family: Roboto, sans-serif;
    font-size: 12px;
}
.avatar.large {
    width: 26px;
    height: 26px;
    margin: 0;
    font-size: 14px;
}

/* gmail */
.gmail {
    flex: 1;
    min-height: 0;
    display: grid;
    grid-template-columns: 205px 1fr 45px;
    grid-template-rows: 51px 1fr;
    padding-bottom: 13px;
    fill: #444746;
}
.app-bar {
    grid-column: 1 / -1;
    display: flex;
    align-items: center;
}
.brand {
    width: 205px;
    padding-left: 21px;
    display: flex;
    align-items: center;
}
.brand button svg {
    height: 12px;
}
.brand-logo {
    width: 24px;
    height: 18px;
    margin: 0 9px 0 15px;
}
.brand-name {
    font-family: Lato, sans-serif;
    font-size: 18px;
    color: #5f6368;
}
.search {
    width: 576px;
    height: 40px;
    display: flex;
    align-items: center;
    gap: 6px;
    padding: 0 14px 0 9px;
    border-radius: 20px;
    background: #eaf1fb;
}
.search svg {
    width: 20px;
    height: 20px;
}
.search input {
    flex: 1;
    border: none;
    background: none;
    font-size: 13px;
    padding: 0;
}
.search input::placeholder {
    color: #5f6368;
}
.search button svg {
    width: 18px;
    height: 18px;
}
.account {
    display: flex;
    align-items: center;
    gap: 15px;
    margin-left: auto;
    padding-right: 14px;
    fill: #5f6368;
}
.account svg {
    width: 20px;
    height: 20px;
}
.compose {
    width: 114px;
    height: 44px;
    margin: 7px 0 13px 6px;
    padding-right: 4px;
    gap: 14px;
    border-radius: 13px;
    background: #c2e7ff;
    color: #001d35;
    font-weight: 500;
    fill: #000;
}
.compose svg {
    width: 18px;
    height: 18px;
}
.folders, .labels {
    display: grid;
    grid-auto-rows: 1fr;
}
.folders {
    height: 154px;
}
.labels {
    height: 461px;
}
.folders a, .labels a {
    display: flex;
    align-items: center;
    gap: 14px;
    padding: 0 10px 0 21px;
    margin-right: 13px;
    border-radius: 0 13px 13px 0;
}
.folders .current {
    background: #d3e3fd;
    color: #001d35;
    fill: #001d35;
    font-weight: 600;
}
.labels-head {
    display: flex;
    align-items: center;
    justify-content: space-between;
    height: 48px;
    padding: 10px 19px 0 21px;
}
.labels-head h2 {
    margin: 0;
    font-size: 13px;
    font-weight: 400;
}
.labels span {
    width: 112px;
    white-space: nowrap;
}
.labels small {
    margin-left: auto;
    font-size: 9px;
    font-weight: 400;
    color: #5f6368;
}
.labels a.unread {
    gap: 0;
    color: #1f1f1f;
    font-weight: 600;
}
.labels a.unread svg {
    margin-right: 14px;
}
.panel {
    display: flex;
    flex-direction: column;
    background: #fff;
    border-radius: 13px;
}
.mail-tools {
    display: flex;
    align-items: center;
    height: 38px;
    padding-left: 15px;
}
.mail-tools input {
    appearance: none;
    width: 12px;
    height: 12px;
    margin: 0 6px 0 0;
    border: 1px solid #5f6368;
    border-radius: 1px;
}
.mail-tools button {
    width: 32px;
}
.mail-tools .caret {
    width: 7px;
    margin-right: 13px;
}
.caret svg {
    width: 7px;
    height: 4px;
}
.categories {
    display: flex;
    height: 45px;
    margin-right: 12px;
    padding-left: 6px;
    border-bottom: 1px solid #eceff1;
}
.categories a {
    display: flex;
    align-items: center;
    gap: 13px;
    width: 188px;
    height: 45px;
    margin-right: 14px;
    padding-left: 7px;
}
.categories .selected {
    color: #0b57d0;
    fill: #0b57d0;
    font-weight: 500;
    box-shadow: inset 0 -2px #0b57d0;
}
.promo {
    display: flex;
    flex-direction: column;
}
.promo-title {
    display: flex;
    align-items: center;
    gap: 6px;
    line-height: 16px;
}
.promo b {
    padding: 0 4px;
    border-radius: 7px;
    background: #188038;
    color: #fff;
    font-size: 9px;
    line-height: 13px;
}
.senders {
    color: #9a9d9c;
    font-size: 9px;
    line-height: 15px;
    white-space: nowrap;
}
.empty {
    display: flex;
    justify-content: center;
    padding: 62px 14px 0 0;
    color: #666;
}
.empty h3 {
    margin: 0 0 9px;
    font-size: 12px;
    line-height: 20px;
    font-weight: 400;
}
.empty p {
    margin: 0 0 10px;
    line-height: 18px;
}
.empty a {
    color: #0b57d0;
}
.mail-footer {
    display: grid;
    grid-template-columns: 1fr 1fr 1fr;
    margin-top: auto;
    padding: 0 26px 139px 13px;
    color: #5f6368;
    fill: #5f6368;
    font-size: 9px;
    line-height: 16px;
}
.meter {
    width: 176px;
    height: 4px;
    margin: 6px 0;
    border-radius: 2px;
    background: #dadce0;
}
.storage span {
    display: flex;
    align-items: center;
    gap: 8px;
}
.storage svg {
    width: 14px;
    height: 14px;
}
.terms {
    text-align: center;
}
.activity {
    text-align: right;
}
.addons {
    display: flex;
    flex-direction: column;
    align-items: center;
}
.addons button {
    height: 45px;
}
.addons hr {
    width: 16px;
    margin: 12px 0;
    border: none;
    border-top: 1px solid #dadce0;
}
.addons .hide-panel {
    height: 20px;
    margin-top: auto;
}

/* windows taskbar */
.taskbar {
    display: flex;
    align-items: center;
    height: 40px;
    flex: none;
    background: linear-gradient(to right, #1d1d1d, #222 35%, #242424 55%, #353431 65%, #393834 77%, #2b2928 83%, #212022);
    color: #fff;
    font-family: "Open Sans", sans-serif;
}
.start {
    width: 48px;
}
.task-search {
    display: flex;
    align-items: center;
    width: 288px;
    height: 40px;
    padding: 0 10px 0 11px;
    background: #474747;
    border: 1px solid #6b6b6b;
}
.task-search input {
    flex: 1;
    border: none;
    background: none;
    padding: 0 0 0 10px;
    font-size: 14px;
}
.task-search input::placeholder {
    color: #d8d8d8;
}
.lens {
    width: 18px;
    height: 18px;
}
.ginger {
    width: 24px;
    height: 32px;
}
.cookie {
    width: 26px;
    height: 28px;
    margin-left: 5px;
}
.apps {
    display: flex;
    padding-left: 2px;
}
.apps button {
    width: 49px;
    height: 40px;
    position: relative;
}
.apps svg {
    width: 24px;
    height: 24px;
}
.apps .open::after {
    content: "";
    position: absolute;
    left: 5px;
    right: 4px;
    bottom: 0;
    height: 2px;
    background: #b4b1ae;
}
.apps .focused {
    background: #3b3a39;
}
.apps .focused::after {
    left: 0;
    right: 0;
}
.apps i {
    position: absolute;
    left: 22px;
    top: 18px;
    width: 16px;
    height: 16px;
    border-radius: 50%;
    font: 10px/16px Roboto, sans-serif;
    text-align: center;
}
.apps .small {
    left: 25px;
    top: 20px;
    width: 12px;
    height: 12px;
    font-size: 8px;
    line-height: 12px;
}
.brown { background: #5d4037; }
.pink { background: #ec407a; }
.purple { background: #512da8; }
.teal { background: #0097a7; }
.rust { background: #bf360c; }
.green { background: #00897b; }
.magenta { background: #c2185b; }
.orange { background: #ef6c00; }
.taupe { background: #8d6e63; }
.blue { background: #0288d1; }
.red { background: #f44336; }
.photo-a { background: linear-gradient(#6bb4a8, #776a52 60%, #b9b9b0); }
.photo-b { background: linear-gradient(135deg, #334, #555 40%, #e07b28 50%, #334 70%); }
.photo-c { background: linear-gradient(90deg, #cfe0f5, #3d76c2 50%, #999); }
.tray {
    display: flex;
    align-items: center;
    gap: 8px;
    margin-left: auto;
}
.clock {
    display: flex;
    flex-direction: column;
    align-items: center;
    width: 72px;
    font-size: 11px;
    line-height: 18px;
}
.notifications {
    width: 44px;
    height: 40px;
    padding-right: 10px;
    position: relative;
}
.notifications i {
    position: absolute;
    left: 15px;
    top: 19px;
    width: 16px;
    height: 16px;
    border: 1px solid #888;
    border-radius: 50%;
    background: #2d2d2d;
    font: 11px/14px "Open Sans", sans-serif;
}
.show-desktop {
    width: 5px;
    height: 40px;
    border-left: 1px solid #666;
}
```
